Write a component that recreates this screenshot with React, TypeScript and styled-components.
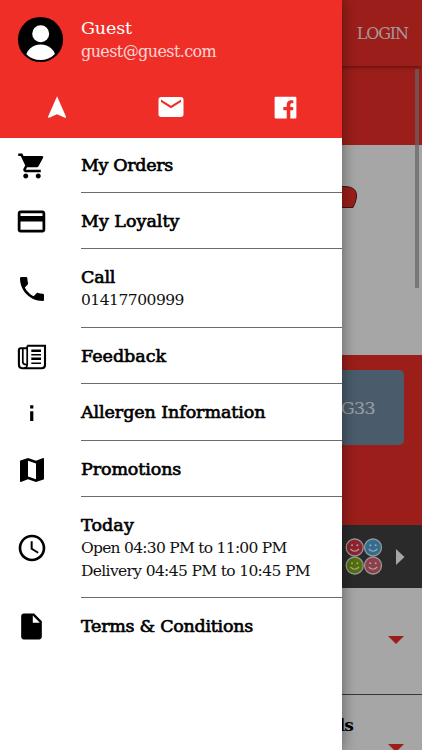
import React from "react";
import styled, { createGlobalStyle, css } from "styled-components";

const GlobalStyle = createGlobalStyle`
  * { box-sizing: border-box; }
  body { margin: 0; overflow: hidden; background: #fff; font-family: "DejaVu Serif", serif; }
  svg { display: block; }
`;

const RED = "#ef2e28";

const Screen = styled.div`
  position: relative;
  width: 422px;
  height: 750px;
  overflow: hidden;
`;

/* ---------- page behind the drawer ---------- */

const Page = styled.div`
  display: flex;
  flex-direction: column;
  height: 750px;
  isolation: isolate;
`;

const TopBar = styled.header`
  height: 66px;
  flex: none;
  display: flex;
  align-items: center;
  justify-content: flex-end;
  padding-right: 14px;
  background: ${RED};
  box-shadow: 0 1px 4px rgba(0, 0, 0, 0.45);
  z-index: 1;
`;

const Login = styled.span`
  color: #fff;
  opacity: 0.9;
  font-size: 16px;
  letter-spacing: -1.1px;
`;

const Banner = styled.div`
  height: 79px;
  flex: none;
  background: ${RED};
`;

const LogoArea = styled.div`
  height: 210px;
  flex: none;
  display: flex;
  justify-content: flex-end;
  align-items: flex-start;
  padding: 40px 64px 0 0;
  background: #fff;
`;

const OrderArea = styled.div`
  height: 170px;
  flex: none;
  padding: 15px 18px 0;
  background: ${RED};
`;

const PostcodeButton = styled.div`
  height: 75px;
  display: flex;
  align-items: center;
  justify-content: flex-end;
  padding-right: 29px;
  border-radius: 5px;
  background: #728ea6;
  color: #fff;
  font-size: 17.5px;
  letter-spacing: -0.7px;
`;

const Dim = styled.span`
  opacity: 0.9;
`;

const RatingBar = styled.div`
  height: 63px;
  flex: none;
  display: flex;
  align-items: center;
  justify-content: flex-end;
  gap: 13px;
  padding-right: 17px;
  background: #414141;
`;

const Category = styled.div`
  height: 107px;
  flex: none;
  display: flex;
  align-items: flex-start;
  justify-content: flex-end;
  padding: 48px 18px 0 0;
  background: #fff;
  border-bottom: 1px solid #555;
`;

const NextCategory = styled(Category)`
  padding-top: 19px;
  gap: 35px;
  border: 0;
`;

const CategoryName = styled.span`
  font: bold 17px/22px "DejaVu Serif", serif;
  letter-spacing: -0.9px;
`;

const ArrowSlot = styled.span`
  padding-top: 30px;
`;

const Scrim = styled.div`
  position: absolute;
  inset: 0;
  background: rgba(0, 0, 0, 0.35);
`;

const ScrollThumb = styled.div`
  position: absolute;
  right: 3px;
  top: 69px;
  width: 4px;
  height: 219px;
  background: rgba(100, 100, 100, 0.7);
`;

/* ---------- drawer ---------- */

const Drawer = styled.aside`
  position: absolute;
  inset: 0 auto 0 0;
  width: 342px;
  background: #fff;
  box-shadow: 0 0 14px rgba(0, 0, 0, 0.45);
`;

const DrawerHeader = styled.div`
  height: 138px;
  padding-top: 16px;
  background: ${RED};
  color: #fff;
`;

const Profile = styled.div`
  display: flex;
  height: 60px;
  padding-left: 17px;
`;

const ProfileText = styled.div`
  display: flex;
  flex-direction: column;
  padding-left: 17px;
`;

const textFit = css<{ $spacing: number }>`
  letter-spacing: ${(p) => p.$spacing}px;
  white-space: nowrap;
`;

const UserName = styled.span<{ $spacing: number }>`
  ${textFit}
  font-size: 17.5px;
  line-height: 24px;
`;

const Email = styled.span<{ $spacing: number }>`
  ${textFit}
  font-size: 16px;
  line-height: 24px;
  opacity: 0.8;
`;

const Shortcuts = styled.nav`
  display: grid;
  grid-template-columns: repeat(3, 1fr);
  place-items: center;
  height: 62px;
`;

const Row = styled.div<{ $height: number }>`
  display: grid;
  grid-template-columns: 81px 1fr;
  height: ${(p) => p.$height}px;
`;

const IconCell = styled.div`
  display: flex;
  align-items: center;
  justify-content: center;
  padding: 1px 18px 0 0;
`;

const RowBody = styled.div<{ $last?: boolean; $top?: number }>`
  display: flex;
  flex-direction: column;
  justify-content: center;
  padding-top: ${(p) => p.$top ?? 2}px;
  border-bottom: 1px solid ${(p) => (p.$last ? "transparent" : "#6b6b6b")};
`;

const Title = styled.span<{ $spacing: number }>`
  ${textFit}
  color: #000;
  font-size: 17.5px;
  line-height: 23px;
  -webkit-text-stroke: 0.65px #000;
`;

const Detail = styled.span<{ $spacing: number }>`
  ${textFit}
  color: #111;
  font-size: 15.5px;
  line-height: 22.5px;
`;

/* ---------- drawings ---------- */

const Glyph = ({ d, size }: { d: string; size: number }) => (
  <svg width={size} height={size} viewBox="0 0 24 24" fill="currentColor">
    <path d={d} />
  </svg>
);

const paths = {
  nav: "M11.600 2L3.600 20.300Q3.500 21.300 4.600 21L11.600 18l7 3q1.100.3 1-.7z",
  mail: "M20 4H4c-1.1 0-1.99.9-1.99 2L2 18c0 1.1.9 2 2 2h16c1.1 0 2-.9 2-2V6c0-1.1-.9-2-2-2zm0 4l-8 5-8-5V6l8 5 8-5v2z",
  facebook:
    "M4 3h16a1 1 0 0 1 1 1v16a1 1 0 0 1-1 1h-4v-6.700h2.400V11.600H16V10c0-1 .5-1.500 1.400-1.500H18.500V5.900h-1.800c-2.300 0-3.700 1.400-3.700 3.700v2H10.200v2.700H13V21H4a1 1 0 0 1-1-1V4a1 1 0 0 1 1-1z",
  cart: "M7 18c-1.100 0-1.990.9-1.990 2S5.900 22 7 22s2-.9 2-2-.9-2-2-2zM1 2v2h2l3.600 7.590-1.350 2.450c-.16.28-.25.61-.25.96 0 1.100.9 2 2 2h12v-2H7.420c-.14 0-.25-.11-.25-.25l.03-.12.9-1.630h7.450c.75 0 1.410-.41 1.750-1.030l3.580-6.490A1.003 1.003 0 0 0 20 4H5.210l-.94-2H1zm16 16c-1.100 0-1.990.9-1.990 2s.89 2 1.990 2 2-.9 2-2-.9-2-2-2z",
  card: "M20 4H4c-1.110 0-1.990.89-1.990 2L2 18c0 1.110.89 2 2 2h16c1.110 0 2-.89 2-2V6c0-1.110-.89-2-2-2zm0 14H4v-6h16v6zm0-10H4V6h16v2z",
  phone:
    "M6.620 10.790c1.440 2.830 3.760 5.140 6.590 6.590l2.200-2.200c.27-.27.67-.36 1.020-.24 1.120.37 2.330.57 3.570.57.55 0 1 .45 1 1V20c0 .55-.45 1-1 1-9.390 0-17-7.610-17-17 0-.55.45-1 1-1h3.500c.55 0 1 .45 1 1 0 1.250.2 2.450.57 3.570.11.35.03.74-.25 1.020l-2.200 2.200z",
  info: "M10.600 6.200h2.400v2.400h-2.400zM10.600 10.600h2.400v7.400h-2.400z",
  map: "M20.500 3l-.16.03L15 5.100 9 3 3.360 4.900c-.21.07-.36.25-.36.48V20.500c0 .28.22.5.5.5l.16-.03L9 18.900l6 2.100 5.640-1.900c.21-.07.36-.25.36-.48V3.500c0-.28-.22-.5-.5-.5zM15 19l-6-2.110V5l6 2.110V19z",
  clock:
    "M11.990 2C6.470 2 2 6.480 2 12s4.470 10 9.990 10C17.520 22 22 17.520 22 12S17.520 2 11.990 2zM12 20c-4.420 0-8-3.580-8-8s3.580-8 8-8 8 3.580 8 8-3.580 8-8 8zm.5-13H11v6l5.250 3.150.75-1.230-4.500-2.670z",
  file: "M6 2c-1.100 0-1.990.9-1.990 2L4 20c0 1.100.89 2 1.990 2H18c1.100 0 2-.9 2-2V8l-6-6H6zm7 7V3.500L18.500 9H13z",
};

const Avatar = () => (
  <svg width="47" height="47" viewBox="0 0 47 47">
    <defs>
      <clipPath id="avatar-disc">
        <circle cx="23.500" cy="23.500" r="20.500" />
      </clipPath>
    </defs>
    <circle cx="23.500" cy="23.500" r="22.600" fill="#000" />
    <g fill="#fff" clipPath="url(#avatar-disc)">
      <circle cx="23.700" cy="17.800" r="8.500" />
      <ellipse cx="23.700" cy="42.500" rx="15" ry="14" />
    </g>
  </svg>
);

const Newspaper = () => (
  <svg width="30" height="26" viewBox="0 0 30 26" fill="none" stroke="#000">
    <path d="M10.200 1.700H28V21q0 3.200-3.200 3.200H5Q1.900 24 1.900 20.500V6q0-1.800 1.800-1.800H10.200" strokeWidth="2.100" />
    <path d="M10.200 1.700V20q0 4-3 4.200M5.800 4.500V18q0 2.500 3.500 2.500" strokeWidth="1.700" />
    <path d="M14.300 6.700H24M14.300 14.700H24" strokeWidth="2.400" />
    <path d="M14.300 10.700H24M14.300 19.200H24" strokeWidth="1.600" />
  </svg>
);

const LogoTip = () => (
  <svg width="40" height="24" viewBox="0 0 40 24">
    <path d="M0 1.500H26C36 1.500 39 6 38.500 12Q38 17 35 22.500H0z" fill={RED} stroke="#5c2020" strokeWidth="1" />
  </svg>
);

const faces = [
  { x: 9.700, y: 9.500, fill: "#dd3546" },
  { x: 28, y: 9.500, fill: "#4aa8dc" },
  { x: 9.700, y: 27.500, fill: "#7fae0c" },
  { x: 28, y: 27.500, fill: "#dd6070" },
];

const Faces = () => (
  <svg width="38" height="37" viewBox="0 0 38 37">
    {faces.map((f) => (
      <g key={f.fill} transform={`translate(${f.x} ${f.y})`}>
        <circle r="8.500" fill={f.fill} stroke="#e8e8e8" strokeWidth="1.300" />
        <circle cx="-2.700" cy="-2.200" r="1" fill="#fff" />
        <circle cx="2.700" cy="-2.200" r="1" fill="#fff" />
        <path d="M-4.300 1.500Q0 6 4.300 1.500" fill="none" stroke="#fff" strokeWidth="1.200" />
      </g>
    ))}
  </svg>
);

const RightArrow = () => (
  <svg width="9" height="16" viewBox="0 0 9 16">
    <path d="M0 0L8.500 8L0 16z" fill="#fff" />
  </svg>
);

const DownArrow = () => (
  <svg width="16" height="8" viewBox="0 0 16 8">
    <path d="M0 0H16L8 8z" fill={RED} />
  </svg>
);

/* ---------- content ---------- */

type Item = {
  title: string;
  spacing: number;
  height: number;
  top?: number;
  icon: React.ReactNode;
  details?: { text: string; spacing: number }[];
};

const items: Item[] = [
  { title: "My Orders", spacing: -0.35, height: 55, top: 0, icon: <Glyph d={paths.cart} size={30} /> },
  { title: "My Loyalty", spacing: 0, height: 56, icon: <Glyph d={paths.card} size={33} /> },
  {
    title: "Call",
    spacing: -0.2,
    height: 79,
    icon: <Glyph d={paths.phone} size={32} />,
    details: [{ text: "01417700999", spacing: -0.5 }],
  },
  { title: "Feedback", spacing: 0, height: 56, icon: <Newspaper /> },
  { title: "Allergen Information", spacing: -0.08, height: 57, top: 0, icon: <Glyph d={paths.info} size={32} /> },
  { title: "Promotions", spacing: -0.1, height: 56, icon: <Glyph d={paths.map} size={32} /> },
  {
    title: "Today",
    spacing: 0.1,
    height: 101,
    icon: <Glyph d={paths.clock} size={32} />,
    details: [
      { text: "Open 04:30 PM to 11:00 PM", spacing: -0.73 },
      { text: "Delivery 04:45 PM to 10:45 PM", spacing: -0.65 },
    ],
  },
  { title: "Terms & Conditions", spacing: -0.27, height: 55, icon: <Glyph d={paths.file} size={31} /> },
];

export default function App() {
  return (
    <Screen>
      <GlobalStyle />
      <Page>
        <TopBar>
          <Login>LOGIN</Login>
        </TopBar>
        <Banner />
        <LogoArea>
          <LogoTip />
        </LogoArea>
        <OrderArea>
          <PostcodeButton>
            <Dim>G33</Dim>
          </PostcodeButton>
        </OrderArea>
        <RatingBar>
          <Faces />
          <RightArrow />
        </RatingBar>
        <Category>
          <DownArrow />
        </Category>
        <NextCategory>
          <CategoryName>ls</CategoryName>
          <ArrowSlot>
            <DownArrow />
          </ArrowSlot>
        </NextCategory>
      </Page>
      <Scrim />
      <ScrollThumb />
      <Drawer>
        <DrawerHeader>
          <Profile>
            <Avatar />
            <ProfileText>
              <UserName $spacing={-0.15}>Guest</UserName>
              <Email $spacing={-0.6}>guest@guest.com</Email>
            </ProfileText>
          </Profile>
          <Shortcuts>
            <Glyph d={paths.nav} size={27} />
            <Glyph d={paths.mail} size={30} />
            <Glyph d={paths.facebook} size={29} />
          </Shortcuts>
        </DrawerHeader>
        {items.map((item, i) => (
          <Row key={item.title} $height={item.height}>
            <IconCell>{item.icon}</IconCell>
            <RowBody $last={i === items.length - 1} $top={item.top}>
              <Title $spacing={item.spacing}>{item.title}</Title>
              {item.details?.map((d) => (
                <Detail key={d.text} $spacing={d.spacing}>
                  {d.text}
                </Detail>
              ))}
            </RowBody>
          </Row>
        ))}
      </Drawer>
    </Screen>
  );
}
